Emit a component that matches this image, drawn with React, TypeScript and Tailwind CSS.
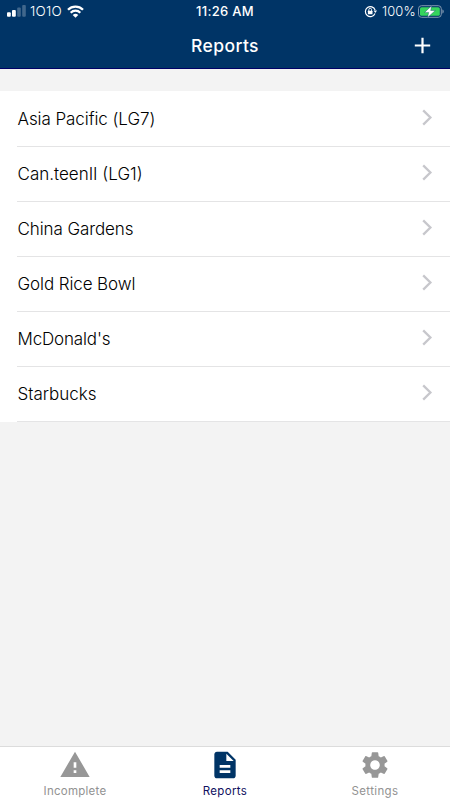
import React from 'react';

import { MdDescription, MdSettings, MdWarning } from 'react-icons/md';

const reports = [
  { name: "Asia Pacific (LG7)", tracking: "tracking-[-0.07px]" },
  { name: "Can.teenII (LG1)", tracking: "tracking-[0px]" },
  { name: "China Gardens", tracking: "tracking-[-0.1px]" },
  { name: "Gold Rice Bowl", tracking: "tracking-[-0.1px]" },
  { name: "McDonald's", tracking: "tracking-[-0.15px]" },
  { name: "Starbucks", tracking: "tracking-[0px]" },
];

const StatusBar = () => {
  return (
    <div className="grid grid-cols-3 items-center h-[23px] w-full text-white leading-none">
      <div className="flex items-center pl-[7px]">
        <svg width="19" height="13" viewBox="0 0 19 13" fill="white">
          <rect x="0" y="7.2" width="3.8" height="4.6" rx="1" />
          <rect x="5" y="4.9" width="3.8" height="6.9" rx="1" />
          <rect x="10.2" y="2.4" width="3.6" height="9.4" rx="1" opacity="0.25" />
          <rect x="15.2" y="0" width="3.6" height="11.8" rx="1" opacity="0.25" />
        </svg>
        <span className="ml-1 w-[37px] text-[13.5px] font-[350] tracking-[0.25px]">1O1O</span>
        <svg width="17" height="13" viewBox="0 0 17 13" fill="none" stroke="white" strokeWidth="2.3" className="mb-px">
          <path d="M1 4.7a10.6 10.6 0 0 1 15 0" />
          <path d="M3.7 7.7a6.8 6.8 0 0 1 9.6 0" />
          <path d="M8.5 12.8 5.7 10a4 4 0 0 1 5.6 0z" fill="white" stroke="none" />
        </svg>
      </div>
      <div className="text-center text-[13px] font-[550] tracking-[0.3px]">11:26 AM</div>
      <div className="flex items-center justify-end pr-[6px]">
        <svg width="13" height="13" viewBox="0 0 13 13" fill="none" stroke="white" strokeWidth="1.2">
          <path d="M11 8.6A5 5 0 1 1 11.1 5" />
          <path d="m9.6 5.5 3.4 0-1.7 2.5z" fill="white" stroke="none" />
          <rect x="3.9" y="5.8" width="4.6" height="3.5" rx="0.5" fill="white" stroke="none" />
          <path d="M4.8 6V4.7a1.4 1.4 0 0 1 2.8 0V6" strokeWidth="0.9" />
        </svg>
        <span className="ml-[5px] w-[36px] whitespace-nowrap text-[13px] font-[350] tracking-[0.1px]">100%</span>
        <svg width="26" height="13" viewBox="0 0 26 13">
          <rect x="0.5" y="0.7" width="22.8" height="11.6" rx="3" fill="none" stroke="#8298b1" />
          <rect x="2" y="2.2" width="19.8" height="8.6" rx="1.6" fill="#35d45c" />
          <path d="M24.4 4.5c1.8.7 1.8 3.3 0 4z" fill="#8298b1" />
          <path d="M13.6.8 6.6 7.4h4.1L9.6 12.4l7.7-6.9h-4.6z" fill="white" stroke="#003466" strokeWidth="0.35" />
        </svg>
      </div>
    </div>
  )
}

const Header = () => {
  return (
    <header className="h-[69px] w-full shrink-0 bg-[#003466] border-b border-[#000066]">
      <StatusBar />
      <div className="grid grid-cols-3 items-center h-[45px]">
        <div />
        <h1 className="text-center text-white text-[17.5px] font-[550] tracking-[0.4px] leading-none">Reports</h1>
        <button className="justify-self-end mr-[19px]">
          <svg width="17" height="17" viewBox="0 0 17 17" stroke="white" strokeWidth="2.2">
            <path d="M8.5 .8v15.4M.8 8.5h15.4" />
          </svg>
        </button>
      </div>
    </header>
  )
}

const ReportList = () => {
  return (
    <ul className="bg-white pt-px">
      {reports.map((report) => (
        <li key={report.name} className="pl-[17px]">
          <div className="flex justify-between items-center h-[55px] pr-[17px] border-b border-[#e4e4e5]">
            <span className={`pt-px pl-[0.5px] text-[17px] font-[350] leading-none text-black ${report.tracking}`}>{report.name}</span>
            <svg width="11" height="17" viewBox="0 0 11 17" fill="none" stroke="#c7c7cc" strokeWidth="2.3" className="mb-[3px]">
              <path d="m1.2 1.4 7.2 7.1-7.2 7.1" />
            </svg>
          </div>
        </li>
      ))}
    </ul>
  )
}

const TabBar = () => {
  return (
    <nav className="grid grid-cols-3 h-[54px] shrink-0 bg-white border-t border-[#dcdcdc] text-[#979797] text-[11.5px] leading-none">
      <div className="flex flex-col items-center pt-[2px]">
        <MdWarning size={32} />
        <span className="mt-[5px] tracking-[0.25px] text-[#929292]">Incomplete</span>
      </div>
      <div className="flex flex-col items-center pt-[2px] text-[#003466]">
        <MdDescription size={32} />
        <span className="mt-[5px] tracking-[0.35px] text-[#101060]">Reports</span>
      </div>
      <div className="flex flex-col items-center pt-[2px]">
        <MdSettings size={32} />
        <span className="mt-[5px] tracking-[0.35px] text-[#929292]">Settings</span>
      </div>
    </nav>
  )
}

const App = () => {
  return (
    <div className="flex flex-col w-[450px] h-[800px] overflow-hidden bg-[#f3f3f3] font-['Inter',sans-serif]">
      <Header />
      <main className="flex-1 pt-[22px]">
        <ReportList />
      </main>
      <TabBar />
    </div>
  )
}

export default App
